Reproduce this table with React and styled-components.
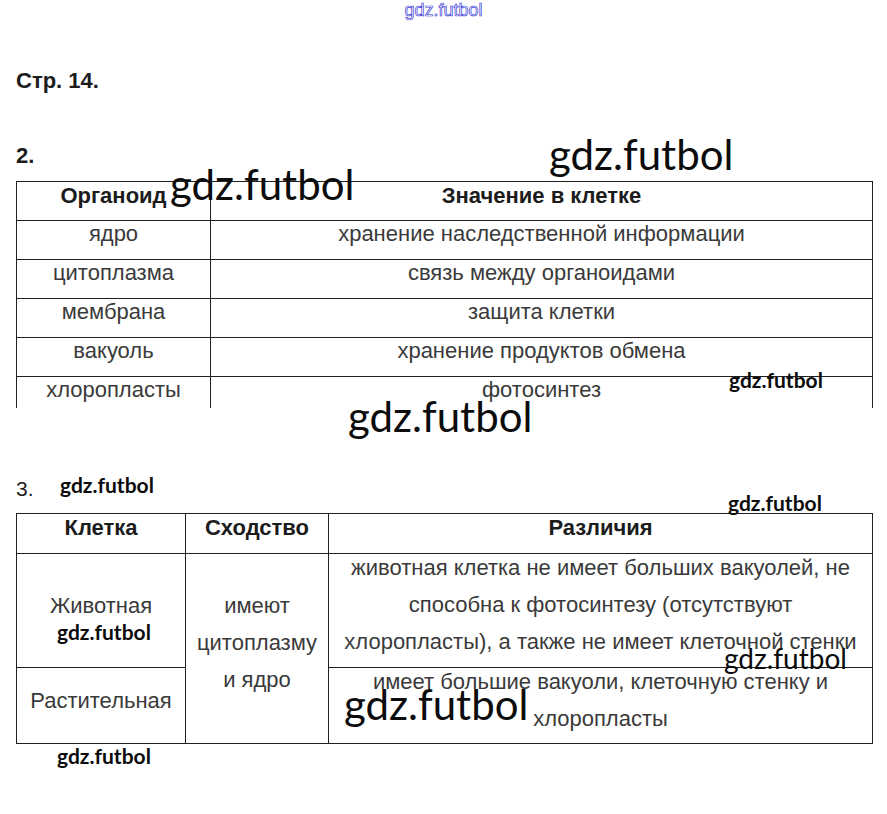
import React from "react";
import styled, { createGlobalStyle } from "styled-components";

const GlobalStyle = createGlobalStyle`
  html, body { margin: 0; padding: 0; background: #ffffff; }
  body { font-family: "Liberation Sans", Arial, sans-serif; color: #222; }
`;

const Page = styled.div`
  position: relative;
  width: 887px;
  height: 814px;
  overflow: hidden;
  padding: 0 14px 0 16px;
  box-sizing: border-box;
  background: #fff;
`;

const TopMark = styled.div`
  font-family: "Liberation Sans", Arial, sans-serif;
  font-size: 18px;
  line-height: 20px;
  height: 20px;
  text-align: center;
  margin-left: -16px;
  margin-right: -14px;
  color: #ffffff;
  -webkit-text-stroke: 0.7px #3b3bd6;
`;

const PageTitle = styled.div`
  font-size: 22px;
  font-weight: 700;
  line-height: 24px;
  color: #1c1c1c;
  margin-top: ${(p) => p.$mt}px;
`;

const TaskNum = styled.div`
  font-size: ${(p) => (p.$light ? 21 : 22)}px;
  font-weight: ${(p) => (p.$light ? 400 : 700)};
  line-height: 24px;
  color: #1c1c1c;
  margin-top: ${(p) => p.$mt}px;
`;

const Grid = styled.div`
  display: grid;
  width: 857px;
  box-sizing: border-box;
  grid-template-columns: ${(p) => p.$cols};
  grid-template-rows: ${(p) => p.$rows};
  gap: 1px;
  padding: ${(p) => (p.$open ? "1px 1px 0 1px" : "1px")};
  background: #1f1f1f;
  margin-top: ${(p) => p.$mt}px;
`;

const Cell = styled.div`
  background: #fff;
  text-align: center;
  font-size: 22px;
  line-height: ${(p) => p.$lh || 24}px;
  font-weight: ${(p) => (p.$head ? 700 : 400)};
  color: ${(p) => (p.$head ? "#1c1c1c" : "#3a3a3a")};
  padding-top: ${(p) => p.$pt || 0}px;
  box-sizing: border-box;
  overflow: hidden;
  white-space: nowrap;
  grid-row: ${(p) => (p.$span ? `span ${p.$span}` : "auto")};
`;

const Lines = styled.div`
  margin-top: ${(p) => p.$mt}px;
`;

const Mark = styled.div`
  position: absolute;
  left: ${(p) => p.$x}px;
  top: ${(p) => p.$base - Math.round(p.$size * 0.887)}px;
  font-family: Lato, "Noto Sans", sans-serif;
  font-size: ${(p) => p.$size}px;
  font-weight: ${(p) => p.$w || 400};
  line-height: 1;
  color: #0c0c0c;
  white-space: nowrap;
  pointer-events: none;
`;

const organoids = [
  ["ядро", "хранение наследственной информации"],
  ["цитоплазма", "связь между органоидами"],
  ["мембрана", "защита клетки"],
  ["вакуоль", "хранение продуктов обмена"],
  ["хлоропласты", "фотосинтез"],
];

const marks = [
  { x: 549, base: 170, size: 42 },
  { x: 170, base: 200, size: 42 },
  { x: 729, base: 388, size: 21, w: 700 },
  { x: 348, base: 432, size: 42 },
  { x: 60, base: 493, size: 21, w: 700 },
  { x: 728, base: 511, size: 21, w: 700 },
  { x: 57, base: 640, size: 21, w: 700 },
  { x: 724, base: 669, size: 28 },
  { x: 344, base: 720, size: 42 },
  { x: 57, base: 764, size: 21, w: 700 },
];

export default function App() {
  return (
    <>
      <GlobalStyle />
      <Page>
        <TopMark>gdz.futbol</TopMark>
        <PageTitle $mt={49}>Стр. 14.</PageTitle>
        <TaskNum $mt={51}>2.</TaskNum>
        <Grid
          $mt={13}
          $open
          $cols="193px 661px"
          $rows="38px 38px 38px 38px 38px 31px"
        >
          <Cell $head $pt={2}>Органоид</Cell>
          <Cell $head $pt={2}>Значение в клетке</Cell>
          {organoids.map(([name, role]) => (
            <React.Fragment key={name}>
              <Cell $pt={1}>{name}</Cell>
              <Cell $pt={1}>{role}</Cell>
            </React.Fragment>
          ))}
        </Grid>
        <TaskNum $light $mt={69}>3.</TaskNum>
        <Grid $mt={12} $cols="168px 142px 543px" $rows="39px 113px 75px">
          <Cell $head $pt={2}>Клетка</Cell>
          <Cell $head $pt={2}>Сходство</Cell>
          <Cell $head $pt={2}>Различия</Cell>
          <Cell $pt={40}>Животная</Cell>
          <Cell $lh={37} $pt={33} $span={2}>
            имеют
            <br />
            цитоплазму
            <br />и ядро
          </Cell>
          <Cell $lh={37}>
            <Lines $mt={-5}>
              животная клетка не имеет больших вакуолей, не
              <br />
              способна к фотосинтезу (отсутствуют
              <br />
              хлоропласты), а также не имеет клеточной стенки
            </Lines>
          </Cell>
          <Cell $pt={21}>Растительная</Cell>
          <Cell $lh={37}>
            <Lines $mt={-5}>
              имеет большие вакуоли, клеточную стенку и
              <br />
              хлоропласты
            </Lines>
          </Cell>
        </Grid>
        {marks.map((m, i) => (
          <Mark key={i} $x={m.x} $base={m.base} $size={m.size} $w={m.w}>
            gdz.futbol
          </Mark>
        ))}
      </Page>
    </>
  );
}
